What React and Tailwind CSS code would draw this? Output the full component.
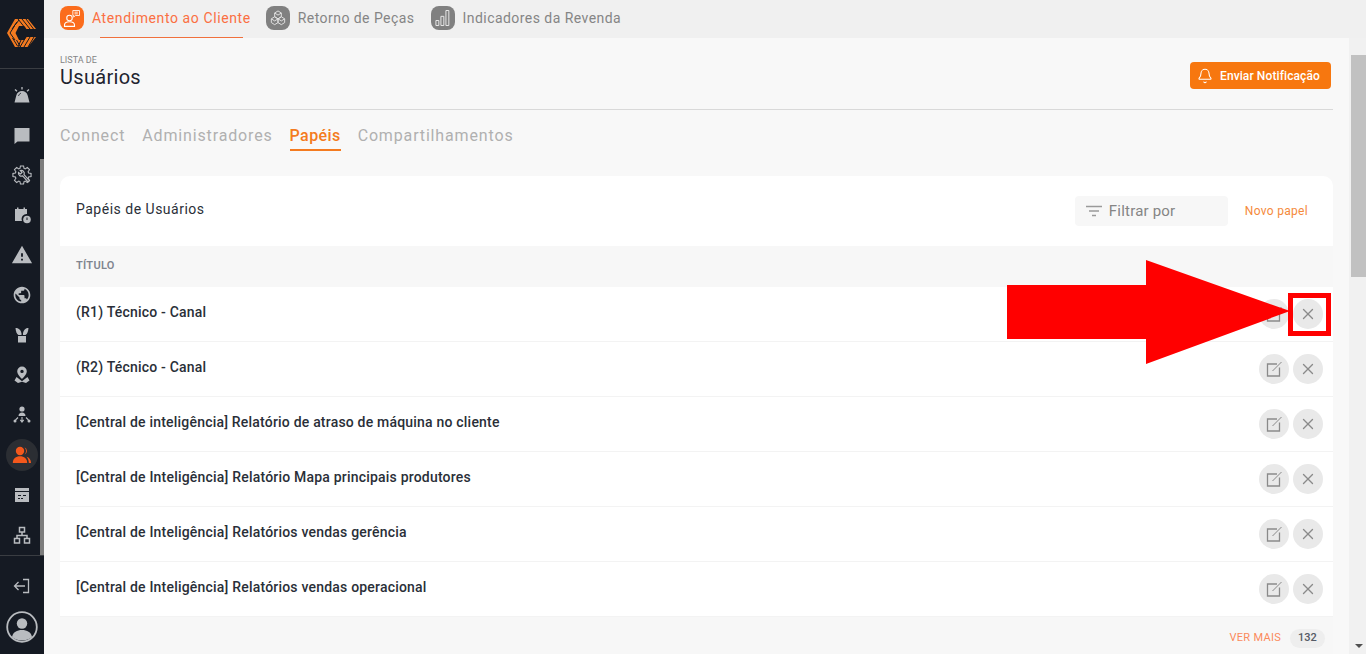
import React from "react";
import { X, Bell } from "lucide-react";
import { MdWarning, MdPublic } from "react-icons/md";

const font = { fontFamily: '"Roboto", "Liberation Sans", sans-serif' };

const rows = [
  "(R1) Técnico - Canal",
  "(R2) Técnico - Canal",
  "[Central de inteligência] Relatório de atraso de máquina no cliente",
  "[Central de Inteligência] Relatório Mapa principais produtores",
  "[Central de Inteligência] Relatórios vendas gerência",
  "[Central de Inteligência] Relatórios vendas operacional",
];

// contorno da engrenagem, 8 dentes
const gearPath = (() => {
  const pts = [];
  for (let i = 0; i < 8; i++) {
    const a = (i * Math.PI) / 4;
    [[-0.3, 6.9], [-0.17, 9.2], [0.17, 9.2], [0.3, 6.9]].forEach(([d, r]) => {
      pts.push(`${(10 + r * Math.cos(a + d)).toFixed(2)} ${(10 + r * Math.sin(a + d)).toFixed(2)}`);
    });
  }
  return `M${pts.join("L")}Z`;
})();

const Siren = () => (
  <svg viewBox="0 0 20 20" className="h-5 w-5" fill="#b9bcc0">
    <path d="M2.500 17.500 L4.300 10.500 C5 7.500 7.300 6 10 6 C12.700 6 15 7.500 15.700 10.500 L17.500 17.500 Z" />
    <path d="M10 2v2.500M3 4.500l2 1.800M17 4.500l-2 1.800" stroke="#b9bcc0" strokeWidth="1.300" />
    <path d="M6.500 11c.4-1.500 1.200-2.300 2.500-2.800" stroke="#151a23" strokeWidth=".8" fill="none" />
  </svg>
);

const Chat = () => (
  <svg viewBox="0 0 20 20" className="h-5 w-5" fill="#b9bcc0">
    <path d="M2.500 3h15v13.500H5.500L2.500 19z" />
  </svg>
);

const Gear = () => (
  <svg viewBox="0 0 20 20" className="h-5 w-5" fill="none" stroke="#b9bcc0" strokeWidth="1.100">
    <path d={gearPath} />
    <path d="M6.500 7.500a3 3 0 0 0 4.200 3.400l5.300 6.100 1.400-1.300-5.400-6A3 3 0 0 0 8.300 5.600l1.700 1.800-1.500 1.500z" fill="#151a23" strokeWidth="1.200" />
  </svg>
);

const CalendarClock = () => (
  <svg viewBox="0 0 20 20" className="h-5 w-5" fill="#b9bcc0">
    <path d="M3 4h2V2.500h1.500V4h5V2.500H13V4h2v5a5 5 0 0 0-5 7H3z" />
    <circle cx="15" cy="14.500" r="3.800" />
    <path d="M15 12.500v2.500" stroke="#151a23" strokeWidth="1" />
  </svg>
);

const Plant = () => (
  <svg viewBox="0 0 20 20" className="h-5 w-5" fill="#b9bcc0">
    <path d="M3.500 3c3 .2 5 1.200 6 5.500V10H6.500C4.500 9 3.800 6 3.500 3z" />
    <path d="M16.500 3c-3 .2-4.500 1.400-5.500 5V10h2.500c2-1 2.700-4 3-7z" />
    <path d="M6 11h8v6.500H6z" />
  </svg>
);

const MapPin = () => (
  <svg viewBox="0 0 20 20" className="h-5 w-5" fill="#b9bcc0">
    <path fillRule="evenodd" d="M10 1.500a4.800 4.800 0 0 1 4.800 4.800c0 3-3 6-4.800 7.700-1.800-1.700-4.800-4.700-4.800-7.700A4.800 4.800 0 0 1 10 1.500zm0 3.200a1.700 1.700 0 1 0 0 3.400 1.700 1.700 0 0 0 0-3.400z" />
    <path d="M4.500 12 2.500 15.500 6 18l4-1.200L14 18l3.500-2.500-2-3.500-2 1.500L10 16.300 6.500 13.500z" />
  </svg>
);

const Hierarchy = () => (
  <svg viewBox="0 0 20 20" className="h-5 w-5" fill="#b9bcc0">
    <circle cx="10" cy="4" r="2.600" />
    <path d="M6.500 11c0-2.200 1.500-3.500 3.500-3.500s3.500 1.300 3.500 3.500z" />
    <circle cx="3" cy="16" r="1.500" />
    <circle cx="17" cy="16" r="1.500" />
    <path d="M10 12v4M8.300 14.800 10 17l1.700-2.200M6 12.500 3.500 15M14 12.500l2.500 2.500" stroke="#b9bcc0" strokeWidth="1.100" fill="none" />
  </svg>
);

const Users = () => (
  <svg viewBox="0 0 20 20" className="h-5 w-5" fill="#f4581c">
    <circle cx="8" cy="6" r="4.200" />
    <path d="M.8 18c0-4.500 3-6.800 7.200-6.800s7.200 2.300 7.200 6.800z" />
    <path d="M12.500 2.200a4.200 4.200 0 0 1 0 7.600 6 6 0 0 0 0-7.600zM14.500 11.800c2.800.8 4.500 3 4.500 6.200h-2.200c0-2.500-.8-4.500-2.300-6.200z" />
  </svg>
);

const Calendar = () => (
  <svg viewBox="0 0 20 20" className="h-5 w-5">
    <path fill="#b9bcc0" d="M3 3h14v14H3z" />
    <path stroke="#151a23" strokeWidth="1" d="M3 6.500h14M6 10.500h3M11 10.500h3M6 13.500h2M9 13.500h2" />
  </svg>
);

const Network = () => (
  <svg viewBox="0 0 20 20" className="h-5 w-5" fill="none" stroke="#b9bcc0" strokeWidth="1.500">
    <path d="M7.500 2.500h5v4.500h-5zM2.500 13.500h5V18h-5zM12.500 13.500h5V18h-5zM10 7v3.500M5 13.500v-3h10v3" />
  </svg>
);

const Logout = () => (
  <svg viewBox="0 0 20 20" className="h-5 w-5" fill="none" stroke="#b9bcc0" strokeWidth="1.300">
    <path d="M11 3.500h5.500v13H11M13 10H2.500M6.500 6 2.500 10l4 4" />
  </svg>
);

const Avatar = () => (
  <svg viewBox="0 0 32 32" className="h-8 w-8">
    <circle cx="16" cy="16" r="14.800" fill="none" stroke="#b9bcc0" strokeWidth="1.800" />
    <circle cx="16" cy="12.500" r="5.200" fill="#b9bcc0" />
    <path d="M6 26c1-5 5-7 10-7s9 2 10 7c-2.500 2.300-6 3.500-10 3.500S8.500 28.300 6 26z" fill="#b9bcc0" />
  </svg>
);

const Logo = () => (
  <svg viewBox="0 0 30 28" className="h-7 w-[30px]">
    <path d="M8 0H21L29 10H19.500L17 7H12L8.500 14L12 21H17L19.500 18H29L21 28H8L0 14Z" fill="#f47b20" />
    <path d="M11 0 18.500 9.500M15 0 23 10M19 0 26.500 10M8 6 12 1M5 10l5-7M3 14l4.500-7M3 14l5 7M5.500 19l5 8M9.500 21l4 7M14 21l-3 7M19 18l-6 10M23 18l-6 10M27 18l-6 10" stroke="#151a23" strokeWidth="1" fill="none" />
  </svg>
);

const Person = () => (
  <svg viewBox="0 0 24 24" className="h-[20px] w-[20px]" fill="none" stroke="#fff" strokeWidth="1.300">
    <circle cx="9" cy="12" r="3.300" />
    <path d="M3 22v-1.500c0-2.500 2.500-4 6-4s6 1.500 6 4V22z" />
    <path d="M13 3h8v6h-5l-2 2V9h-1zM15 5h4M15 7h4" strokeWidth="1" />
  </svg>
);

const Cubes = () => (
  <svg viewBox="0 0 24 24" className="h-[20px] w-[20px]" fill="none" stroke="#e6e6e6" strokeWidth="1.100">
    <path d="M12 3.500 16 6v4.500l-4 2.500-4-2.500V6zM8 10.500 12 13v4.500L8 20l-4-2.500V13zM16 10.500l4 2.500v4.500L16 20l-4-2.500V13zM8 6l4 2.500L16 6M4 13l4 2.500 4-2.500 4 2.500 4-2.500" />
  </svg>
);

const Bars = () => (
  <svg viewBox="0 0 24 24" className="h-[20px] w-[20px]" fill="none" stroke="#e6e6e6" strokeWidth="1.200">
    <path d="M3.500 15h3.500v6H3.500zM9.500 10H13v11H9.500zM15.500 3H19v18h-3.500z" />
  </svg>
);

const FilterIcon = () => (
  <svg viewBox="0 0 18 12" className="h-3 w-[18px]" stroke="#9a9a9a" strokeWidth="1.300">
    <path d="M1 1.500h16M4 6h10M7 10.500h4" />
  </svg>
);

const EditIcon = () => (
  <svg viewBox="0 0 20 20" className="h-5 w-5" fill="none" stroke="#8a8a8a" strokeWidth="1.300">
    <path d="M13 5H3.500v12h12V8.500" />
    <path d="M8.500 12 17.500 3" strokeWidth="1" />
  </svg>
);

const sideIcons = [
  <Siren key="a" />,
  <Chat key="b" />,
  <Gear key="c" />,
  <CalendarClock key="d" />,
  <MdWarning key="e" size={22} color="#b9bcc0" />,
  <MdPublic key="f" size={20} color="#b9bcc0" />,
  <Plant key="g" />,
  <MapPin key="h" />,
  <Hierarchy key="i" />,
  <Users key="j" />,
  <Calendar key="k" />,
  <Network key="l" />,
];

function Sidebar() {
  return (
    <aside className="flex h-full w-11 shrink-0 flex-col bg-[#151a23]">
      <div className="flex h-[69px] shrink-0 items-center justify-center border-b border-[#3a3d42] pb-[2px]">
        <Logo />
      </div>
      <div className="flex h-[487px] shrink-0 border-b border-[#3a3d42]">
        <nav className="flex w-10 flex-col items-center pt-[6px]">
          {sideIcons.map((icon, i) => (
            <div key={i} className="flex h-10 w-full shrink-0 items-center justify-center pl-[4px]">
              <div className={`flex h-8 w-8 items-center justify-center rounded-full ${i === 9 ? "bg-[#2b2e33]" : ""}`}>
                {icon}
              </div>
            </div>
          ))}
        </nav>
        <div className="flex w-1 flex-col pt-[90px]">
          <div className="w-1 flex-1 bg-[#7d7d7d]" />
        </div>
      </div>
      <div className="flex flex-col items-center">
        <div className="mt-[20px] flex h-5 items-center justify-center">
          <Logout />
        </div>
        <div className="mt-[15px]">
          <Avatar />
        </div>
      </div>
    </aside>
  );
}

function TopTabs() {
  return (
    <div className="flex h-[38px] shrink-0 items-center bg-[#f0f0f0] pl-4 text-[14px] tracking-[0.45px] text-[#858585]">
      <div className="relative flex h-full items-center pb-[2px]">
        <span className="flex h-6 w-6 items-center justify-center rounded-[8px] bg-[#fb6c1c]">
          <Person />
        </span>
        <span className="ml-2 tracking-[0.6px] text-[#fb6f42]">Atendimento ao Cliente</span>
        <span className="absolute bottom-0 left-10 right-2 h-px bg-[#f0703c]" />
      </div>
      <div className="ml-[15px] flex h-full items-center pb-[2px]">
        <span className="flex h-6 w-6 items-center justify-center rounded-[8px] bg-[#808080]">
          <Cubes />
        </span>
        <span className="ml-2">Retorno de Peças</span>
      </div>
      <div className="ml-4 flex h-full items-center pb-[2px]">
        <span className="flex h-6 w-6 items-center justify-center rounded-[8px] bg-[#808080]">
          <Bars />
        </span>
        <span className="ml-2">Indicadores da Revenda</span>
      </div>
    </div>
  );
}

function Row({ title }) {
  return (
    <div className="flex h-[55px] shrink-0 items-center justify-between border-b border-[#f3f3f3] pl-4 pr-[10px]">
      <span className="-mt-[4px] text-[14px] font-medium tracking-[0.2px] text-[#2a2f38]">{title}</span>
      <div className="flex items-center gap-1">
        <button className="flex h-[30px] w-[30px] items-center justify-center rounded-full bg-[#e9e9e9]">
          <EditIcon />
        </button>
        <button className="flex h-[30px] w-[30px] items-center justify-center rounded-full bg-[#e9e9e9] text-[#8a8a8a]">
          <X size={18} strokeWidth={1.8} />
        </button>
      </div>
    </div>
  );
}

function Card() {
  return (
    <div className="mx-4 flex min-h-0 flex-1 flex-col overflow-hidden rounded-t-[10px] bg-white">
      <div className="flex h-[70px] shrink-0 justify-between pl-4 pr-[25px] pt-5">
        <span className="mt-[3px] text-[14px] tracking-[0.5px] text-[#2a2f38]">Papéis de Usuários</span>
        <div className="flex">
          <div className="flex h-[30px] w-[153px] items-center rounded bg-[#f7f7f7] pl-[10px] text-[15px] tracking-[0.2px] text-[#858585]">
            <FilterIcon />
            <span className="ml-[6px]">Filtrar por</span>
          </div>
          <span className="ml-[17px] flex h-[30px] items-center text-[12px] tracking-[0.3px] text-[#f58a3c]">Novo papel</span>
        </div>
      </div>
      <div className="flex h-[41px] shrink-0 items-center bg-[#f7f7f7] pl-4 text-[11px] font-semibold tracking-[0.3px] text-[#80858f]">
        TÍTULO
      </div>
      {rows.map((r) => (
        <Row key={r} title={r} />
      ))}
      <div className="flex flex-1 items-center justify-end bg-[#f7f7f7] pr-2 pt-[6px]">
        <span className="text-[11px] tracking-[0.3px] text-[#fb8a5c]">VER MAIS</span>
        <span className="ml-[9px] flex h-[19px] w-[35px] items-center justify-center rounded-full bg-[#eeeeee] text-[11px] font-medium text-[#555b66]">132</span>
      </div>
    </div>
  );
}

function Scrollbar() {
  return (
    <div className="flex w-[17px] shrink-0 flex-col bg-[#f1f1f1] pl-[2px]">
      <div className="h-[17px] shrink-0" />
      <div className="h-[222px] bg-[#c1c1c1]" />
      <div className="flex flex-1 items-end justify-center pb-[6px]">
        <div className="h-0 w-0 border-x-[4px] border-t-[4px] border-x-transparent border-t-[#505050]" />
      </div>
    </div>
  );
}

export default function App() {
  return (
    <div className="relative flex h-[654px] w-[1366px] overflow-hidden bg-[#f8f8f8]" style={font}>
      <Sidebar />
      <div className="flex min-w-0 flex-1 flex-col">
        <TopTabs />
        <div className="flex min-h-0 flex-1">
          <main className="flex min-w-0 flex-1 flex-col">
            <div className="mx-4 flex h-[72px] shrink-0 items-start justify-between border-b border-[#d9d9d9] pt-[18px]">
              <div>
                <div className="text-[9px] leading-[9px] text-[#858585]">LISTA DE</div>
                <div className="text-[20px] leading-[25px] tracking-[0.3px] text-[#1f2430]">Usuários</div>
              </div>
              <button className="mr-[2px] mt-[6px] flex h-[27px] w-[141px] items-center justify-start gap-[7px] rounded bg-[#f7770f] pl-[7px] text-[12px] font-medium tracking-[0.1px] text-white">
                <Bell size={16} strokeWidth={1.6} />
                Enviar Notificação
              </button>
            </div>
            <div className="flex h-[66px] shrink-0 gap-[17px] px-4 pt-[14px] text-[16px] tracking-[0.85px] text-[#b0b0b0]">
              <span className="h-[27px]">Connect</span>
              <span className="h-[27px]">Administradores</span>
              <span className="h-[27px] border-b-2 border-[#f47b20] font-medium tracking-[0.4px] text-[#f47b20]">Papéis</span>
              <span className="h-[27px]">Compartilhamentos</span>
            </div>
            <Card />
          </main>
          <Scrollbar />
        </div>
      </div>
      {/* marcacao vermelha por cima da tabela */}
      <svg className="absolute left-[1007px] top-[260px]" width="283" height="104" viewBox="0 0 283 104">
        <path d="M0 25H139V0L283 51 139 104V79H0z" fill="#ff0000" />
      </svg>
      <div className="absolute left-[1288px] top-[293px] h-[43px] w-[43px] border-[5px] border-[#ff0000]" />
    </div>
  );
}
